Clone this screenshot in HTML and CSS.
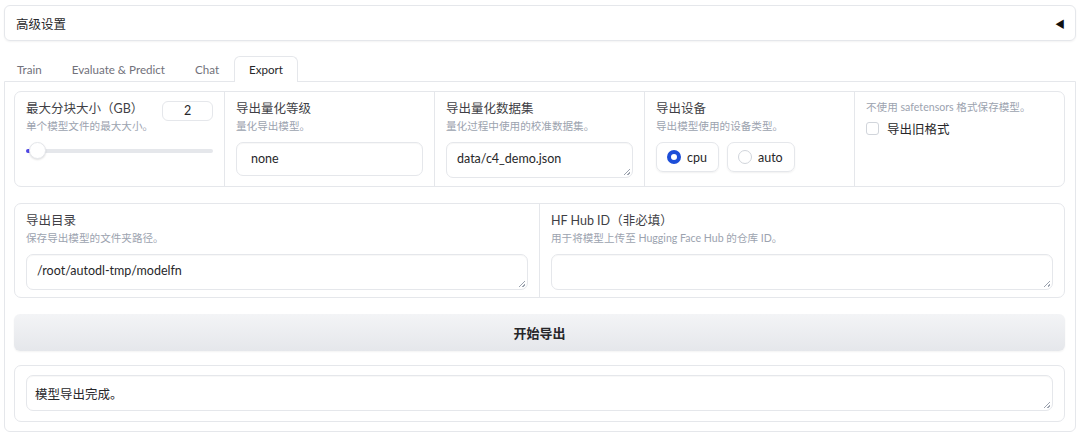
FILE: index.html
```html
<!DOCTYPE html>
<html>
  <head>
    <title>Export</title>
    <link rel="stylesheet" href="styles.css">
  </head>
  <body>
    <div class="accordion">
      <span>高级设置</span>
      <span class="caret">◀</span>
    </div>

    <div class="tabs">
      <div class="tab-nav">
        <button class="tab">Train</button>
        <button class="tab">Evaluate &amp; Predict</button>
        <button class="tab">Chat</button>
        <button class="tab selected">Export</button>
      </div>

      <div class="panel">
        <div class="row">
          <div class="col">
            <div class="label-line">
              <div>
                <div class="label">最大分块大小（GB）</div>
                <div class="info">单个模型文件的最大大小。</div>
              </div>
              <div class="number">2</div>
            </div>
            <div class="slider">
              <div class="fill"></div>
              <div class="thumb"></div>
            </div>
          </div>
          <div class="col">
            <div class="label">导出量化等级</div>
            <div class="info">量化导出模型。</div>
            <div class="input">none</div>
          </div>
          <div class="col">
            <div class="label">导出量化数据集</div>
            <div class="info">量化过程中使用的校准数据集。</div>
            <div class="input area">data/c4_demo.json<span class="grip"></span></div>
          </div>
          <div class="col">
            <div class="label">导出设备</div>
            <div class="info">导出模型使用的设备类型。</div>
            <div class="radios">
              <label class="radio"><span class="dot checked"></span>cpu</label>
              <label class="radio"><span class="dot"></span>auto</label>
            </div>
          </div>
          <div class="col">
            <div class="info top">不使用 safetensors 格式保存模型。</div>
            <label class="check"><span class="box"></span>导出旧格式</label>
          </div>
        </div>

        <div class="row second">
          <div class="col">
            <div class="label">导出目录</div>
            <div class="info">保存导出模型的文件夹路径。</div>
            <div class="input area">/root/autodl-tmp/modelfn<span class="grip"></span></div>
          </div>
          <div class="col">
            <div class="label">HF Hub ID（非必填）</div>
            <div class="info">用于将模型上传至 Hugging Face Hub 的仓库 ID。</div>
            <div class="input area"><span class="grip"></span></div>
          </div>
        </div>

        <button class="export">开始导出</button>

        <div class="output">
          <div class="input area result">模型导出完成。<span class="grip"></span></div>
        </div>
      </div>
    </div>
  </body>
</html>
```

FILE: styles.css
```css
html,
body {
  margin: 0;
  padding: 0;
  background: #fff;
  overflow: hidden;
}

body {
  padding: 5px 4px 0 4px;
  font-family: Lato, "Noto Sans CJK SC", sans-serif;
  color: #27272a;
}

.accordion {
  display: flex;
  justify-content: space-between;
  align-items: center;
  height: 34px;
  padding: 0 10px 0 11px;
  border: 1px solid #e5e7eb;
  border-radius: 6px;
  box-shadow: 0 1px 2px rgba(0, 0, 0, 0.05);
  font-size: 12.5px;
}

.caret {
  font-size: 10px;
  color: #111;
}

.tabs {
  margin-top: 15px;
}

.tab-nav {
  display: flex;
  height: 25px;
}

.tab {
  font-family: Lato, "Noto Sans CJK SC", sans-serif;
  font-size: 11.6px;
  color: #71717a;
  background: none;
  border: 1px solid transparent;
  border-bottom: none;
  padding: 0 14px;
  margin: 0;
  cursor: pointer;
}

.tab:first-child {
  margin-left: -2px;
}

.tab.selected {
  color: #27272a;
  background: #fff;
  border-color: #e5e7eb;
  border-radius: 6px 6px 0 0;
  position: relative;
  z-index: 1;
  margin-bottom: -1px;
  height: 26px;
}

.panel {
  border: 1px solid #e5e7eb;
  border-radius: 0 0 6px 6px;
  padding: 9px 10px 9px 9px;
  display: flex;
  flex-direction: column;
}

.row {
  display: flex;
  flex-shrink: 0;
  height: 96px;
  box-sizing: border-box;
  border: 1px solid #e5e7eb;
  border-radius: 7px;
  margin-bottom: 16px;
}

.row.second {
  height: 95px;
}

.col {
  flex: 1;
  padding: 8px 11px 0 11px;
  border-left: 1px solid #e5e7eb;
  min-width: 0;
}

.col:first-child {
  border-left: none;
}

.label {
  font-size: 12.5px;
  line-height: 18px;
  color: #3f3f46;
}

.info {
  font-size: 10.6px;
  line-height: 17px;
  color: #9ca3af;
}

.info.top {
  margin-top: -1px;
}

.label-line {
  display: flex;
  justify-content: space-between;
  align-items: flex-start;
}

.number {
  width: 51px;
  height: 20px;
  box-sizing: border-box;
  border: 1px solid #e5e7eb;
  border-radius: 6px;
  font-size: 12.5px;
  line-height: 18px;
  text-align: center;
  margin-top: 1px;
}

.slider {
  position: relative;
  height: 4px;
  background: #e5e7eb;
  border-radius: 2px;
  margin-top: 14px;
  margin-left: 3px;
}

.fill {
  position: absolute;
  left: -3px;
  top: 0;
  width: 5px;
  height: 4px;
  border-radius: 2px;
  background: #4f46e5;
}

.thumb {
  position: absolute;
  left: 0;
  top: -7px;
  width: 17px;
  height: 17px;
  box-sizing: border-box;
  border-radius: 50%;
  background: #fff;
  border: 1px solid #e5e7eb;
  box-shadow: 0 1px 2px rgba(0, 0, 0, 0.12);
}

.input {
  position: relative;
  margin-top: 7px;
  height: 34px;
  box-sizing: border-box;
  border: 1px solid #e5e7eb;
  border-radius: 7px;
  padding: 0 14px;
  font-size: 12.5px;
  line-height: 32px;
  color: #27272a;
  box-shadow: inset 0 1px 1px rgba(0, 0, 0, 0.03);
}

.input.area {
  height: 36px;
  padding: 0 10px;
}

.grip {
  position: absolute;
  right: 2px;
  bottom: 2px;
  width: 6px;
  height: 6px;
  background: linear-gradient(135deg, transparent 45%, #9ca3af 45%, #9ca3af 55%, transparent 55%, transparent 75%, #9ca3af 75%, #9ca3af 85%, transparent 85%);
}

.radios {
  display: flex;
  gap: 8px;
  margin-top: 7px;
}

.radio {
  display: flex;
  align-items: center;
  gap: 6px;
  height: 30px;
  box-sizing: border-box;
  padding: 0 11px 0 10px;
  border: 1px solid #e5e7eb;
  border-radius: 7px;
  box-shadow: 0 1px 2px rgba(0, 0, 0, 0.06);
  font-size: 12.5px;
  color: #27272a;
}

.dot {
  width: 14px;
  height: 14px;
  box-sizing: border-box;
  border-radius: 50%;
  border: 1px solid #d1d5db;
  background: #fff;
}

.dot.checked {
  border: 4px solid #1d4ed8;
}

.check {
  display: flex;
  align-items: center;
  gap: 8px;
  margin-top: 3px;
  font-size: 12.5px;
  color: #27272a;
}

.box {
  width: 13px;
  height: 13px;
  box-sizing: border-box;
  border: 1px solid #d1d5db;
  border-radius: 3px;
}

.export {
  flex-shrink: 0;
  height: 37px;
  margin-bottom: 14px;
  border: none;
  border-radius: 6px;
  background: linear-gradient(to bottom, #f3f4f6, #e5e7eb);
  box-shadow: 0 1px 2px rgba(0, 0, 0, 0.05);
  font-family: Lato, "Noto Sans CJK SC", sans-serif;
  font-size: 13px;
  font-weight: 700;
  color: #27272a;
}

.output {
  flex-shrink: 0;
  border: 1px solid #e5e7eb;
  border-radius: 7px;
  padding: 9px 11px 10px 11px;
  height: 57px;
  box-sizing: border-box;
}

.input.result {
  margin-top: 0;
  padding: 0 8px;
  line-height: 38px;
}
```
